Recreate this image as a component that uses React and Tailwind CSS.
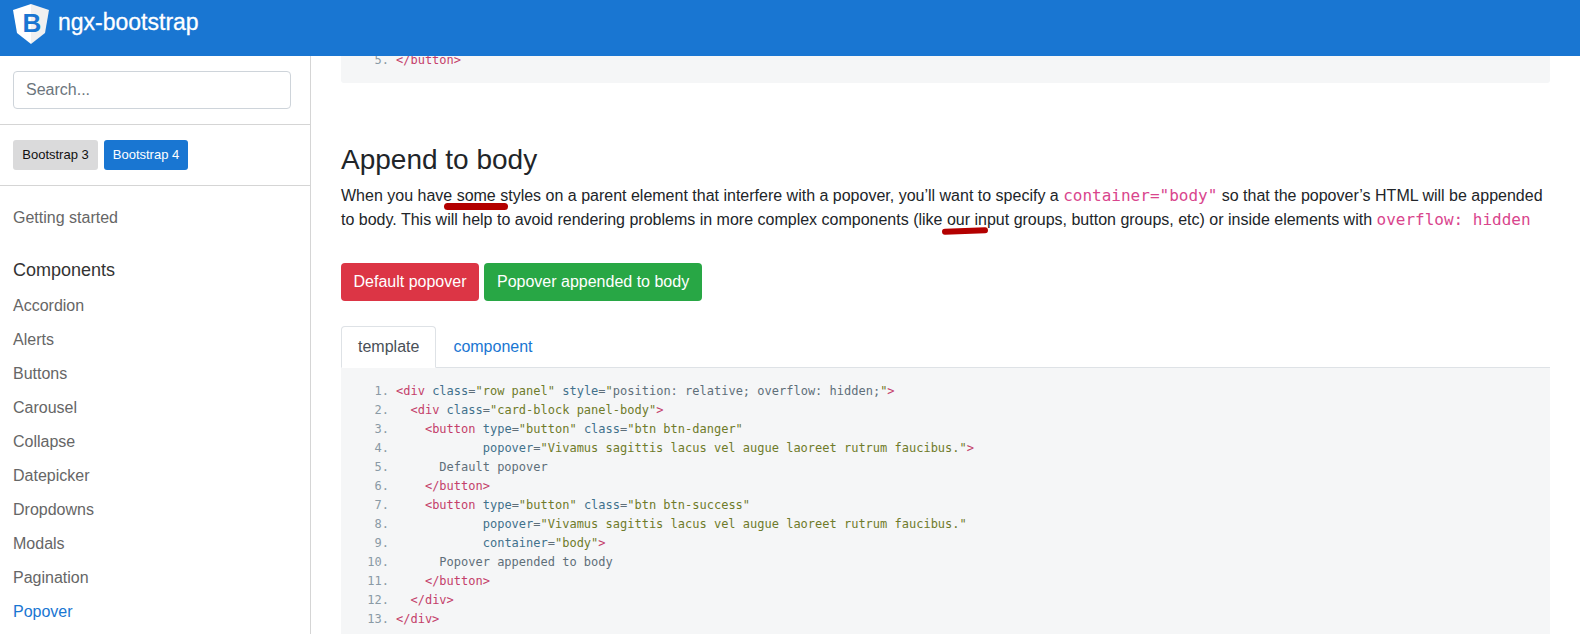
const navItems = ["Accordion", "Alerts", "Buttons", "Carousel", "Collapse", "Datepicker", "Dropdowns", "Modals", "Pagination"];

const Tag = ({ children }) => <span className="text-[#c43e6a]">{children}</span>;
const Attr = ({ children }) => <span className="text-[#41718c]">{children}</span>;
const Val = ({ children }) => <span className="text-[#6f7b2a]">{children}</span>;

const codeLines = [
  <><Tag>&lt;div</Tag> <Attr>class</Attr>=<Val>"row panel"</Val> <Attr>style</Attr>=<Val>"</Val><span className="text-[#5f6f7a]">position: relative; overflow: hidden;</span><Val>"</Val><Tag>&gt;</Tag></>,
  <>  <Tag>&lt;div</Tag> <Attr>class</Attr>=<Val>"card-block panel-body"</Val><Tag>&gt;</Tag></>,
  <>    <Tag>&lt;button</Tag> <Attr>type</Attr>=<Val>"button"</Val> <Attr>class</Attr>=<Val>"btn btn-danger"</Val></>,
  <>            <Attr>popover</Attr>=<Val>"Vivamus sagittis lacus vel augue laoreet rutrum faucibus."</Val><Tag>&gt;</Tag></>,
  <>      Default popover</>,
  <>    <Tag>&lt;/button&gt;</Tag></>,
  <>    <Tag>&lt;button</Tag> <Attr>type</Attr>=<Val>"button"</Val> <Attr>class</Attr>=<Val>"btn btn-success"</Val></>,
  <>            <Attr>popover</Attr>=<Val>"Vivamus sagittis lacus vel augue laoreet rutrum faucibus."</Val></>,
  <>            <Attr>container</Attr>=<Val>"body"</Val><Tag>&gt;</Tag></>,
  <>      Popover appended to body</>,
  <>    <Tag>&lt;/button&gt;</Tag></>,
  <>  <Tag>&lt;/div&gt;</Tag></>,
  <><Tag>&lt;/div&gt;</Tag></>,
];

const CodeRow = ({ n, children }) => (
  <div className="flex h-[19px] leading-[19px] whitespace-pre">
    <span className="w-[48px] text-right text-[#8a9aa5]">{n}.</span>
    <span className="ml-[7px] text-[#5f6f7a]">{children}</span>
  </div>
);

const Logo = () => (
  <svg width="36" height="40" viewBox="0 0 36 40" className="shrink-0">
    <path d="M18 0 L0 6 L4 29 L18 40 Z" fill="#ffffff" />
    <path d="M18 0 L36 6 L32 29 L18 40 Z" fill="#f0f0f0" />
    <text x="19" y="28" textAnchor="middle" fontSize="26" fontWeight="700" fontFamily="'Liberation Sans', sans-serif" fill="#1976d2">B</text>
  </svg>
);

export default function App() {
  return (
    <div className="h-[634px] w-[1580px] overflow-hidden bg-white font-['Liberation_Sans',Arial,sans-serif] text-base text-[#212529]">
      <header className="relative z-10 flex h-[56px] items-center gap-[9px] bg-[#1976d2] pl-[13px] pb-[8px]">
        <Logo />
        <span className="mb-[4px] text-[23px] text-white [-webkit-text-stroke:0.3px_white]">ngx-bootstrap</span>
      </header>

      <div className="flex h-[578px]">
        <aside className="w-[311px] shrink-0 overflow-hidden border-r border-[#d5d5d5]">
          <div className="border-b border-[#d5d5d5] px-[13px] py-[15px]">
            <input
              placeholder="Search..."
              className="block h-[38px] w-[278px] rounded border border-[#ced4da] px-[12px] text-base outline-none placeholder:text-[#6c757d]"
            />
          </div>
          <div className="flex gap-[6px] border-b border-[#d5d5d5] px-[13px] py-[15px]">
            <button className="h-[30px] w-[85px] rounded-[3px] bg-[#dadadb] text-[13px] text-[#111]">Bootstrap 3</button>
            <button className="h-[30px] w-[84px] rounded-[3px] bg-[#1976d2] text-[13px] text-white">Bootstrap 4</button>
          </div>
          <nav className="px-[13px] pt-[15px] text-[#666]">
            <div className="flex h-[34px] items-center">Getting started</div>
            <div className="mt-[18px] flex h-[34px] items-center text-lg text-[#333]">Components</div>
            <div className="mt-[2px]">
              {navItems.map((item) => (
                <div key={item} className="flex h-[34px] items-center">{item}</div>
              ))}
              <div className="flex h-[34px] items-center text-[#1976d2]">Popover</div>
            </div>
          </nav>
        </aside>

        <main className="min-w-0 flex-1 px-[30px]">
          <div className="flex h-[27px] flex-col rounded-b-[3px] bg-[#f5f6f7] font-['DejaVu_Sans_Mono',monospace] text-xs">
            <div className="-mt-[5px]">
              <CodeRow n={5}><Tag>&lt;/button&gt;</Tag></CodeRow>
            </div>
          </div>

          <h2 className="mt-[60px] text-[28px] leading-[34px]">Append to body</h2>
          <div className="relative mt-[7px]">
            <p className="leading-[24px]">
              When you have some styles on a parent element that interfere with a popover, you’ll want to specify a{" "}
              <code className="font-['DejaVu_Sans_Mono',monospace] text-[#d9458d]">container="body"</code> so that the popover’s HTML will be appended to body. This will help to avoid rendering problems in more complex components (like our input groups, button groups, etc) or inside elements with{" "}
              <code className="font-['DejaVu_Sans_Mono',monospace] text-[#d9458d]">overflow: hidden</code>
            </p>
            <span className="absolute left-[103px] top-[19px] h-[7px] w-[64px] rounded-full bg-[#b30000]" />
            <span className="absolute left-[601px] top-[44px] h-[6px] w-[46px] -rotate-2 rounded-full bg-[#b30000]" />
          </div>

          <div className="mt-[31px] flex gap-[5px]">
            <button className="h-[38px] rounded bg-[#dc3545] px-[12.5px] text-white">Default popover</button>
            <button className="h-[38px] rounded bg-[#28a745] px-[13px] text-white">Popover appended to body</button>
          </div>

          <div className="mt-[25px] flex h-[42px] border-b border-[#dee2e6]">
            <div className="-mb-px flex h-[42px] items-center rounded-t border border-[#dee2e6] border-b-white bg-white px-[16px] text-[#495057]">template</div>
            <div className="flex items-center px-[17px] text-[#1976d2]">component</div>
          </div>

          <div className="bg-[#f5f6f7] pt-[14px] pb-[20px] font-['DejaVu_Sans_Mono',monospace] text-xs">
            {codeLines.map((line, i) => (
              <CodeRow key={i} n={i + 1}>{line}</CodeRow>
            ))}
          </div>
        </main>
      </div>
    </div>
  );
}
